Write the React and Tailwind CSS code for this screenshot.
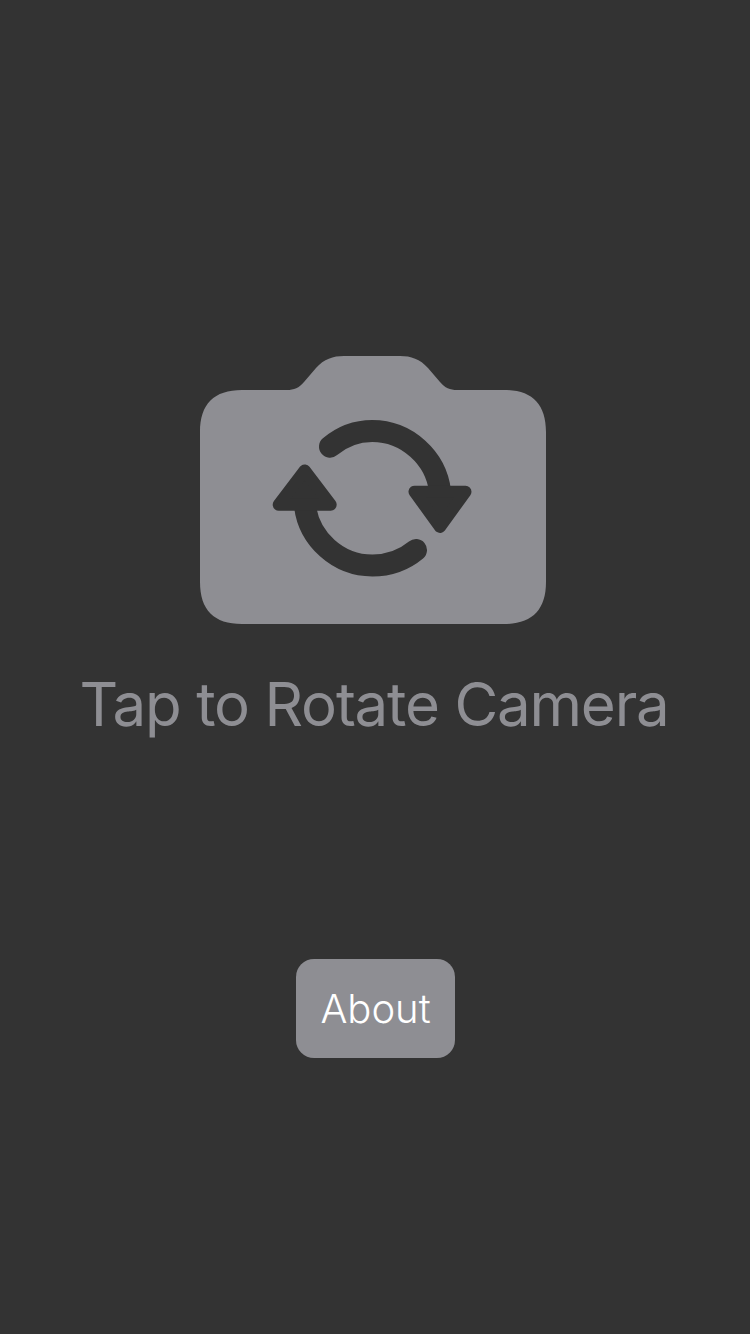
import React from "react";

const CameraIcon = () => (
  <svg width="346" height="268" viewBox="0 0 346 268" className="mr-1 block">
    <path
      d="M42 34H87C94 34 99 32 104 26L116 12C124 3 133 0 144 0H200C211 0 220 3 228 12L240 26C245 32 250 34 257 34H304C332 34 346 48 346 76V226C346 254 332 268 304 268H42C14 268 0 254 0 226V76C0 48 14 34 42 34Z"
      fill="#8e8e93"
    />
    <g fill="none" stroke="#333333" strokeWidth="22" strokeLinecap="round">
      <path d="M130 90.7C142 80.5 156 75 172.3 75C207 75 236 102 240 135" />
      <path d="M216 194C204 204 189 209.5 172.3 209.5C138 209.5 109 183 105 150" />
    </g>
    <g fill="#333333" stroke="#333333" strokeWidth="12" strokeLinejoin="round">
      <path d="M214.5 135.7H265.5L240 171Z" />
      <path d="M78.7 148.7H130.7L104.7 114.5Z" />
    </g>
  </svg>
);

export default function App() {
  return (
    <div className="flex min-h-[1334px] flex-col items-center bg-[#333333] pt-[356px] font-['Inter','Liberation_Sans',sans-serif]">
      <CameraIcon />
      <p className="mt-[44px] mr-[2px] text-[60px] leading-[73px] font-normal tracking-[-1.2px] text-[#8e8e93]">Tap to Rotate Camera</p>
      <button className="mt-[218px] ml-[1px] flex h-[99px] w-[159px] items-center justify-center rounded-[18px] bg-[#8e8e93] text-[40px] font-light text-white">
        About
      </button>
    </div>
  );
}
